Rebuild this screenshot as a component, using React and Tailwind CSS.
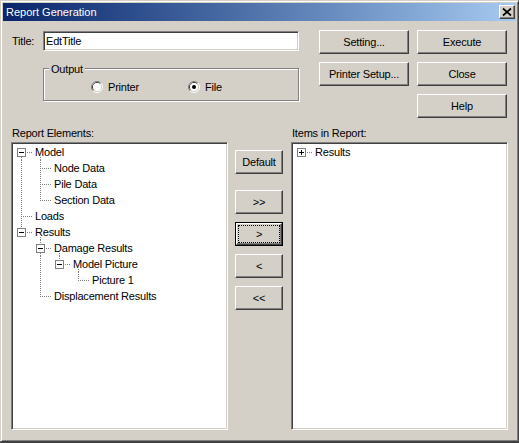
import React from 'react';

const raised =
  'border border-t-white border-l-white border-r-[#404040] border-b-[#404040] shadow-[inset_-1px_-1px_0_#808080]';
const sunken =
  'border border-t-[#808080] border-l-[#808080] border-r-white border-b-white shadow-[inset_1px_1px_0_#404040,inset_-1px_-1px_0_#d4d0c8]';

const leftTree = [
  { label: 'Model', level: 0, box: true, open: true, first: true },
  { label: 'Node Data', level: 1, cont: [0] },
  { label: 'Pile Data', level: 1, cont: [0] },
  { label: 'Section Data', level: 1, cont: [0], last: true },
  { label: 'Loads', level: 0 },
  { label: 'Results', level: 0, box: true, open: true, last: true },
  { label: 'Damage Results', level: 1, box: true, open: true },
  { label: 'Model Picture', level: 2, cont: [1], box: true, open: true, last: true },
  { label: 'Picture 1', level: 3, cont: [1], last: true },
  { label: 'Displacement Results', level: 1, last: true },
];

const rightTree = [{ label: 'Results', level: 0, box: true, first: true, last: true }];

const lx = (l) => 8 + 19 * l + 0.5;

function TreeRow({ item }) {
  const { label, level, cont = [], last, box, open, first } = item;
  const w = 22 + 19 * level;
  const x = lx(level);
  const dot = { stroke: '#808080', strokeDasharray: '1 1' };
  return (
    <div className="flex h-[16px] items-center">
      <svg width={w} height="16" className="shrink-0 overflow-visible" shapeRendering="crispEdges">
        {cont.map((a) => (
          <line key={a} x1={lx(a)} y1="0" x2={lx(a)} y2="16" {...dot} />
        ))}
        {box ? (
          <>
            {!first && <line x1={x} y1="0" x2={x} y2="4" {...dot} />}
            {!last && <line x1={x} y1="13" x2={x} y2="16" {...dot} />}
            <line x1={x + 5} y1="8.5" x2={w - 2} y2="8.5" {...dot} />
            <rect x={x - 4} y="4.5" width="8" height="8" fill="#fff" stroke="#808080" />
            <line x1={x - 2.5} y1="8.5" x2={x + 2.5} y2="8.5" stroke="#000" />
            {!open && <line x1={x} y1="6" x2={x} y2="11" stroke="#000" />}
            {open && <line x1={lx(level + 1)} y1="13" x2={lx(level + 1)} y2="16" {...dot} />}
          </>
        ) : (
          <>
            <line x1={x} y1="0" x2={x} y2={last ? 9 : 16} {...dot} />
            <line x1={x + 1} y1="8.5" x2={w - 2} y2="8.5" {...dot} />
          </>
        )}
      </svg>
      <span className="leading-[16px] whitespace-nowrap">{label}</span>
    </div>
  );
}

function Btn({ children, className = '' }) {
  return (
    <div className={`${raised} flex items-center justify-center ${className}`}>
      {children}
    </div>
  );
}

function FocusBtn({ children }) {
  return (
    <div className="h-[24px] w-[48px] border border-black">
      <div className={`${raised} h-full p-[1px]`}>
        <div className="flex h-full w-full items-center justify-center border border-dotted border-black">
          {children}
        </div>
      </div>
    </div>
  );
}

function Radio({ checked }) {
  return (
    <svg width="12" height="12" viewBox="0 0 12 12" className="shrink-0">
      <path d="M2.11 9.89 A5.5 5.5 0 0 1 9.89 2.11" stroke="#808080" fill="none" />
      <path d="M9.89 2.11 A5.5 5.5 0 0 1 2.11 9.89" stroke="#fff" fill="none" />
      <path d="M2.82 9.18 A4.5 4.5 0 0 1 9.18 2.82" stroke="#404040" fill="none" />
      <path d="M9.18 2.82 A4.5 4.5 0 0 1 2.82 9.18" stroke="#d4d0c8" fill="none" />
      <circle cx="6" cy="6" r="4" fill="#fff" />
      {checked && <circle cx="6" cy="6" r="2" fill="#000" />}
    </svg>
  );
}

export default function App() {
  return (
    <div className="h-[443px] w-[519px] bg-[#404040] font-['Liberation_Sans',Arial,sans-serif] text-[11px] tracking-[-0.2px] text-black">
      <div className="flex h-[442px] w-[519px] flex-col border border-t-[#d4d0c8] border-l-[#d4d0c8] border-r-[#404040] border-b-[#404040] bg-[#d4d0c8] p-[2px] shadow-[inset_1px_1px_0_#fff,inset_-1px_-1px_0_#808080]">
        {/* Caption */}
        <div className="flex h-[18px] shrink-0 items-center justify-between bg-linear-to-r from-[#0a246a] to-[#a6caf0] pl-[3px] pr-[1px]">
          <span className="tracking-normal text-white">Report Generation</span>
          <div className={`${raised} h-[14px] w-[16px] bg-[#d4d0c8]`}>
            <svg width="14" height="12" viewBox="0 0 14 12">
              <path d="M3 2.5 L11 9.5 M11 2.5 L3 9.5" stroke="#000" strokeWidth="1.7" />
            </svg>
          </div>
        </div>

        <div className="flex flex-col pl-[8px] pt-[9px]">
          {/* Top area */}
          <div className="flex">
            <div className="flex w-[288px] flex-col">
              <div className="mt-[1px] flex h-[20px] items-center">
                <span className="w-[32px] pl-[1px]">Title:</span>
                <input
                  readOnly
                  value="EdtTitle"
                  className={`${sunken} h-[20px] w-[256px] bg-white pl-[2px] outline-none`}
                />
              </div>
              <div className="relative ml-[32px] mt-[17px] h-[33px] w-[256px] border border-[#808080] shadow-[inset_1px_1px_0_#fff,1px_1px_0_#fff]">
                <span className="absolute left-[5px] top-[-6px] bg-[#d4d0c8] px-[2px] leading-[12px]">Output</span>
                <div className="flex h-full items-center pl-[47px] pt-[5px]">
                  <div className="flex w-[97px] items-center gap-[5px]">
                    <Radio />
                    <span>Printer</span>
                  </div>
                  <div className="flex items-center gap-[5px]">
                    <Radio checked />
                    <span>File</span>
                  </div>
                </div>
              </div>
            </div>
            <div className="ml-[20px] grid grid-cols-[90px_90px] gap-[8px]">
              <Btn className="h-[24px]">Setting...</Btn>
              <Btn className="h-[24px]">Execute</Btn>
              <Btn className="h-[24px]">Printer Setup...</Btn>
              <Btn className="h-[24px]">Close</Btn>
              <Btn className="col-start-2 h-[24px]">Help</Btn>
            </div>
          </div>

          {/* Lists */}
          <div className="mt-[8px] flex">
            <div className="flex w-[217px] flex-col">
              <div className="h-[16px] pl-[1px] leading-[14px]">Report Elements:</div>
              <div className={`${sunken} h-[288px] overflow-hidden bg-white pl-[1px] pt-[1px]`}>
                {leftTree.map((it) => (
                  <TreeRow key={it.label} item={it} />
                ))}
              </div>
            </div>
            <div className="ml-[7px] flex w-[48px] flex-col pt-[24px]">
              <Btn className="h-[24px]">Default</Btn>
              <Btn className="mt-[16px] h-[24px]">&gt;&gt;</Btn>
              <div className="mt-[8px]">
                <FocusBtn>&gt;</FocusBtn>
              </div>
              <Btn className="mt-[8px] h-[24px]">&lt;</Btn>
              <Btn className="mt-[8px] h-[24px]">&lt;&lt;</Btn>
            </div>
            <div className="ml-[8px] flex w-[217px] flex-col">
              <div className="h-[16px] pl-[1px] leading-[14px]">Items in Report:</div>
              <div className={`${sunken} h-[288px] overflow-hidden bg-white pl-[1px] pt-[1px]`}>
                {rightTree.map((it) => (
                  <TreeRow key={it.label} item={it} />
                ))}
              </div>
            </div>
          </div>
        </div>
      </div>
    </div>
  );
}
